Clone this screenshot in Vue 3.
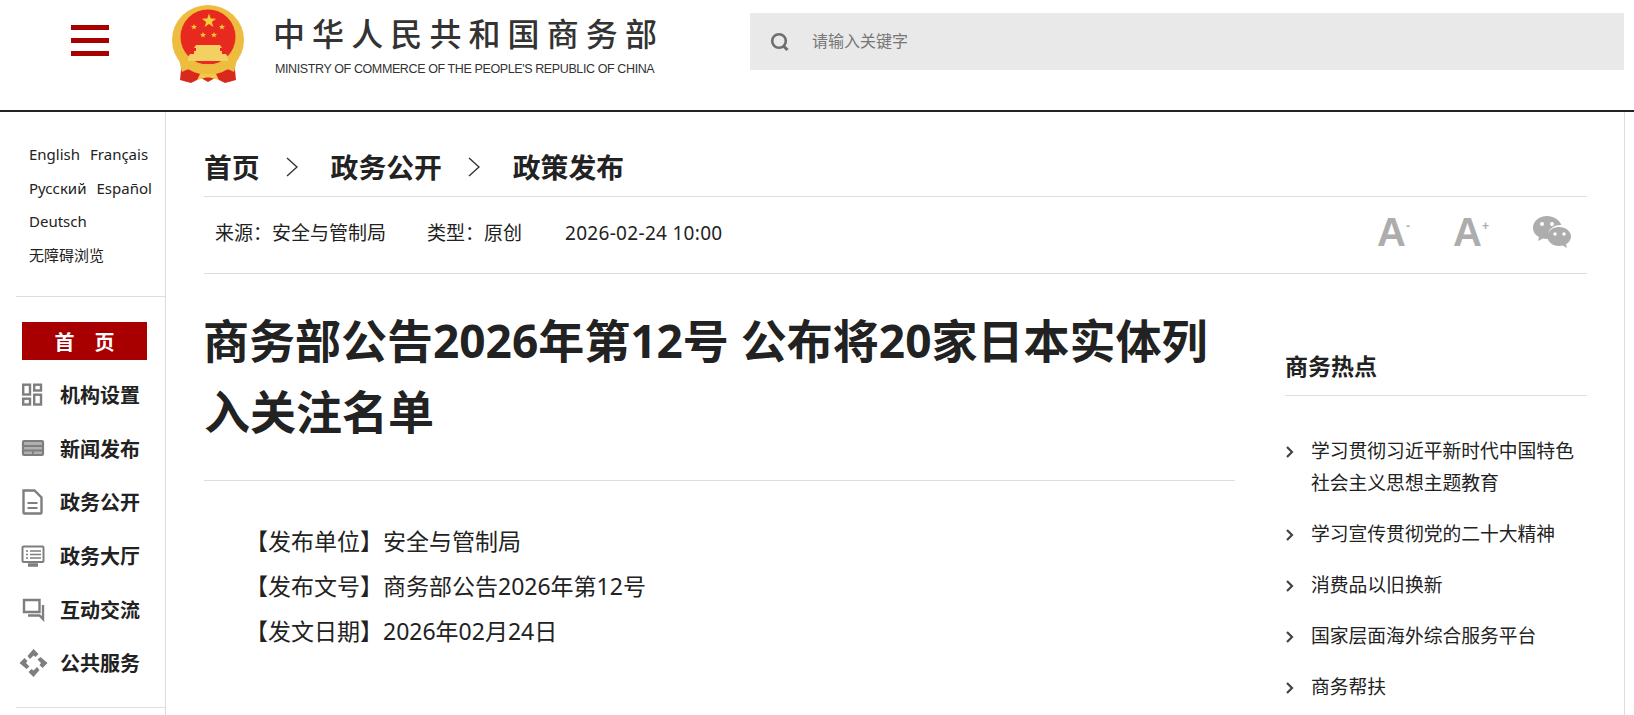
<script setup>
const langs = [
  ['English', 'Français'],
  ['Русский', 'Español'],
  ['Deutsch'],
  ['无障碍浏览'],
]
const navs = [
  { id: 'org', label: '机构设置' },
  { id: 'news', label: '新闻发布' },
  { id: 'doc', label: '政务公开' },
  { id: 'hall', label: '政务大厅' },
  { id: 'chat', label: '互动交流' },
  { id: 'service', label: '公共服务' },
]
const hots = [
  '学习贯彻习近平新时代中国特色社会主义思想主题教育',
  '学习宣传贯彻党的二十大精神',
  '消费品以旧换新',
  '国家层面海外综合服务平台',
  '商务帮扶',
]
const star = '0,-10 2.350,-3.240 9.510,-3.090 3.800,1.240 5.880,8.090 0,4 -5.880,8.090 -3.800,1.240 -9.510,-3.090 -2.350,-3.240'
const stars = [
  { x: 37, y: 17, s: 0.75 },
  { x: 22, y: 23, s: 0.32 },
  { x: 50, y: 23, s: 0.32 },
  { x: 31, y: 31, s: 0.32 },
  { x: 42, y: 31, s: 0.32 },
]
</script>

<template>
  <div class="page">
    <header class="header">
      <div class="burger"><i></i><i></i><i></i></div>
      <svg class="emblem" viewBox="0 0 76 82" width="76" height="82">
        <path d="M10 56 L8 76 L19 79 L29 74 L36 78 L43 74 L53 79 L64 76 L62 56 Z" fill="#d9281e" />
        <ellipse cx="36" cy="36" rx="36" ry="35" fill="#eebc3f" />
        <ellipse cx="36" cy="33" rx="27.500" ry="27.500" fill="#e8291f" />
        <polygon v-for="(p, i) in stars" :key="i" :points="star" :transform="`translate(${p.x} ${p.y}) scale(${p.s})`" fill="#f6cf3a" />
        <path d="M24 41h24l2 3h-2v3h2v3h4l2 3v4H16v-4l2-3h4v-3h2v-3h-2z" fill="#f4cf62" />
        <path d="M6 52 Q20 62 36 60 Q52 62 66 52 L62 68 Q52 62 44 66 L36 74 L28 66 Q20 62 10 68 Z" fill="#eebc3f" />
        <path d="M28 70 h16 l3 6 -11 -3 -11 3z" fill="#f2c94c" />
      </svg>
      <div class="wordmark">
        <div class="wordmark-cn">中华人民共和国商务部</div>
        <div class="wordmark-en">MINISTRY OF COMMERCE OF THE PEOPLE'S REPUBLIC OF CHINA</div>
      </div>
      <div class="search">
        <svg width="20" height="20" viewBox="0 0 20 20" class="search-icon">
          <circle cx="9" cy="9" r="6.800" fill="none" stroke="#6e6e6e" stroke-width="2.600" />
          <path d="M13.500 14l4 4" stroke="#6e6e6e" stroke-width="3" fill="none" />
        </svg>
        <span class="search-text">请输入关键字</span>
      </div>
    </header>

    <div class="body">
      <aside class="side">
        <div class="langs">
          <div v-for="(row, i) in langs" :key="i" class="lang-row">
            <span v-for="l in row" :key="l">{{ l }}</span>
          </div>
        </div>
        <div class="side-nav">
          <div class="home-btn">首&emsp;页</div>
          <div v-for="n in navs" :key="n.id" class="nav-item">
            <svg class="nav-icon" viewBox="0 0 24 24" width="24" height="24" fill="none" stroke="#7e7e7e" stroke-width="2.400">
              <g v-if="n.id === 'org'">
                <rect x="2.200" y="1.700" width="6.800" height="9.800" />
                <rect x="13.200" y="1.700" width="6.800" height="5.800" />
                <rect x="2.200" y="15.700" width="6.800" height="5.800" />
                <rect x="13.200" y="11.700" width="6.800" height="9.800" />
              </g>
              <g v-else-if="n.id === 'news'">
                <rect x="2" y="5" width="20" height="14" rx="1" fill="#b0b0b0" stroke-width="2.200" />
                <path d="M3 10h18M3 14.500h18M12 14.500v4" stroke-width="1.800" />
              </g>
              <g v-else-if="n.id === 'doc'">
                <path d="M2.500 0.500h11l7 7v15a1 1 0 0 1-1 1H3.500a1 1 0 0 1-1-1z" />
                <path d="M6.500 13h10M6.500 18h10" stroke-width="2" />
              </g>
              <g v-else-if="n.id === 'hall'">
                <rect x="1.500" y="2.500" width="21" height="15.500" rx="1" stroke-width="2" />
                <path d="M5 7h2M9 7h11M5 10.500h2M9 10.500h11M5 14h2M9 14h11" stroke-width="1.500" />
                <path d="M7 21h10" stroke-width="3.500" />
              </g>
              <g v-else-if="n.id === 'chat'">
                <path d="M3 3h15.500v12H3z" />
                <path d="M22 8v14l-3.500-3.500H7" />
              </g>
              <g v-else fill="#7e7e7e" stroke="none" transform="translate(12.500 12)">
                <polygon v-for="r in [0, 90, 180, 270]" :key="r" points="-6,-7 0,-14 5,-9 2,-6 0,-7.500 -3.500,-4" :transform="`rotate(${r})`" />
              </g>
            </svg>
            <span>{{ n.label }}</span>
          </div>
        </div>
      </aside>

      <main class="main">
        <nav class="crumbs">
          <span>首页</span>
          <svg class="crumb-sep" width="12" height="20" viewBox="0 0 12 20"><path d="M1 1l10 9-10 9" fill="none" stroke="#333" stroke-width="1.400" /></svg>
          <span>政务公开</span>
          <svg class="crumb-sep" width="12" height="20" viewBox="0 0 12 20"><path d="M1 1l10 9-10 9" fill="none" stroke="#333" stroke-width="1.400" /></svg>
          <span>政策发布</span>
        </nav>
        <div class="meta">
          <div class="meta-text">
            <span class="m1">来源：安全与管制局</span>
            <span class="m2">类型：原创</span>
            <span class="m3">2026-02-24 10:00</span>
          </div>
          <div class="tools">
            <span class="font-tool">A<sup>-</sup></span>
            <span class="font-tool">A<sup>+</sup></span>
            <svg width="40" height="34" viewBox="0 0 40 34">
              <path d="M15 1C7 1 1 6 1 13c0 4 2 7 6 9l-1 4 5-2.500c1 .3 2.500 .5 4 .5h1.500c-.5-1.500-.5-2.500-.5-3.500 0-6 5.500-10.500 12.500-10.500h1C27 4.500 21.500 1 15 1z" fill="#adadad" />
              <path d="M27 12c-6.500 0-11.500 4.200-11.500 9.500S20.500 31 27 31c1.300 0 2.500-.2 3.700-.5l4.300 2.500-1-3.700c3-1.800 5-4.700 5-7.800C39 16.200 33.500 12 27 12z" fill="#adadad" />
              <circle cx="10" cy="9" r="2" fill="#fff" /><circle cx="20" cy="9" r="2" fill="#fff" />
              <circle cx="23" cy="19" r="1.700" fill="#fff" /><circle cx="32" cy="19" r="1.700" fill="#fff" />
            </svg>
          </div>
        </div>

        <div class="columns">
          <article class="article">
            <h1>商务部公告2026年第12号 公布将20家日本实体列入关注名单</h1>
            <div class="content">
              <p>【发布单位】安全与管制局</p>
              <p>【发布文号】商务部公告2026年第12号</p>
              <p>【发文日期】2026年02月24日</p>
            </div>
          </article>
          <aside class="hot">
            <h2>商务热点</h2>
            <ul>
              <li v-for="h in hots" :key="h">
                <svg width="10" height="14" viewBox="0 0 10 14" class="hot-arrow"><path d="M2 2l5 5-5 5" fill="none" stroke="#444" stroke-width="2.200" /></svg>
                <span>{{ h }}</span>
              </li>
            </ul>
          </aside>
        </div>
      </main>
    </div>
  </div>
</template>

<style>
html, body {
  margin: 0;
  background: #fff;
  overflow: hidden;
}
</style>

<style scoped>
.page {
  height: 715px;
  overflow: hidden;
  font-family: "Noto Sans", "Noto Sans CJK SC", sans-serif;
  color: #222;
}

.header {
  height: 110px;
  border-bottom: 2px solid #222;
  display: flex;
  align-items: flex-start;
  padding-right: 10px;
}

.burger {
  margin: 25px 0 0 71px;
  width: 38px;
}

.burger i {
  display: block;
  height: 5px;
  background: #a80000;
  margin-bottom: 8px;
}

.emblem {
  margin: 4px 0 0 63px;
}

.wordmark {
  margin: 14px 0 0 25px;
  width: 384px;
  color: #333;
}

.wordmark-cn {
  font-size: 32px;
  font-weight: 500;
  line-height: 40px;
  letter-spacing: 7.100px;
  white-space: nowrap;
}

.wordmark-en {
  font-family: "Liberation Sans", sans-serif;
  font-size: 12.500px;
  line-height: 16px;
  letter-spacing: -0.390px;
  margin: 7px 0 0 2px;
  white-space: nowrap;
}

.search {
  margin: 13px 0 0 93px;
  flex: 1;
  height: 57px;
  background: #e9e9e9;
  display: flex;
  align-items: center;
  padding-left: 20px;
  font-size: 16px;
  color: #777;
}

.search-icon {
  margin-right: 22px;
}

.search-text {
  margin-top: -3px;
}

.body {
  display: flex;
  width: 1625px;
  box-sizing: border-box;
  border-right: 1px solid #ddd;
}

.side {
  width: 149px;
  border-right: 1px solid #ddd;
  padding-left: 16px;
}

.langs {
  padding: 26px 0 24px 13px;
  border-bottom: 1px solid #ddd;
}

.lang-row {
  display: flex;
  gap: 10px;
  font-size: 15px;
  line-height: 33.500px;
  white-space: nowrap;
}

.side-nav {
  padding: 25px 0 17px 6px;
  border-bottom: 1px solid #ddd;
}

.home-btn {
  width: 125px;
  height: 38px;
  background: #a80000;
  color: #fff;
  font-weight: 700;
  font-size: 20px;
  line-height: 41px;
  text-align: center;
  margin-bottom: 8px;
}

.nav-item {
  display: flex;
  align-items: center;
  height: 53.600px;
  font-size: 20px;
  font-weight: 700;
  color: #222;
}

.nav-icon {
  margin: 0 15px 0 -1px;
  overflow: visible;
}

.main {
  width: 1383px;
  margin-left: 38px;
}

.crumbs {
  height: 85px;
  box-sizing: border-box;
  border-bottom: 1px solid #ddd;
  display: flex;
  align-items: center;
  padding-top: 26px;
  font-size: 27.800px;
  font-weight: 700;
  line-height: 36px;
}

.crumb-sep {
  margin: 0 33px 0 26px;
}

.meta {
  height: 77px;
  box-sizing: border-box;
  border-bottom: 1px solid #ddd;
  display: flex;
  align-items: center;
  justify-content: space-between;
  padding: 0 15px 6px 11px;
  font-size: 19px;
}

.m1 {
  margin-right: 41px;
}

.m2 {
  margin-right: 43px;
}

.m3 {
  letter-spacing: 0.300px;
}

.tools {
  display: flex;
  align-items: center;
  gap: 40px;
}

.font-tool {
  font-family: "Liberation Sans", sans-serif;
  font-size: 40px;
  font-weight: 700;
  color: #adadad;
  width: 36px;
  line-height: 40px;
}

.font-tool:nth-child(2) {
  margin-right: 3px;
}

.font-tool sup {
  font-size: 12px;
  vertical-align: 16px;
  line-height: 0;
}

.columns {
  display: flex;
}

.article {
  width: 1031px;
}

h1 {
  margin: 0;
  padding: 31px 0 33px;
  border-bottom: 1px solid #ddd;
  font-size: 46px;
  font-weight: 700;
  line-height: 71px;
  text-indent: -1px;
}

.content {
  padding: 38px 0 0 41px;
  font-size: 23px;
  line-height: 45px;
}

.content p {
  margin: 0;
}

.hot {
  width: 302px;
  margin-left: 50px;
}

h2 {
  margin: 0;
  padding: 76px 0 13px;
  border-bottom: 1px solid #ddd;
  font-size: 23px;
  line-height: 32px;
  font-weight: 700;
}

ul {
  list-style: none;
  margin: 0;
  padding: 39px 0 0;
}

li {
  display: flex;
  font-size: 18.800px;
  line-height: 32px;
  margin-bottom: 19px;
  color: #222;
}

.hot-arrow {
  flex: none;
  margin: 10px 16px 0 0;
}
</style>
